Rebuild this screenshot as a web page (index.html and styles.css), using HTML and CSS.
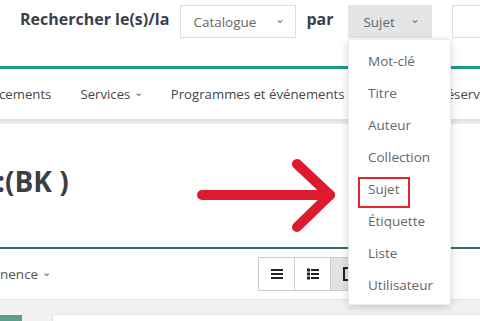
FILE: index.html
```html
<!DOCTYPE html>
<html lang="fr">
<head>
<meta charset="utf-8">
<link rel="stylesheet" href="styles.css">
</head>
<body>
<div class="page">
  <header class="topbar">
    <span class="search-label">Rechercher le(s)/la</span>
    <div class="select select-catalogue"><span>Catalogue</span><span class="chev">&#x2304;</span></div>
    <span class="par">par</span>
    <div class="select select-field"><span>Sujet</span><span class="chev">&#x2304;</span></div>
    <div class="input-box"></div>
  </header>
  <div class="teal-line"></div>
  <nav class="mainnav">
    <span class="nav-item first">cements</span>
    <span class="nav-item">Services <span class="nchev">&#x2304;</span></span>
    <span class="nav-item programmes">Programmes et événements</span>
    <span class="nav-item">Réservations</span>
  </nav>
  <div class="nav-shadow"></div>
  <section class="content">
    <h1 class="title">:(BK )</h1>
  </section>
  <div class="dark-line"></div>
  <div class="toolbar">
    <span class="sort">nence <span class="nchev">&#x2304;</span></span>
    <div class="btn-group">
      <span class="vbtn">
        <svg width="14" height="12" viewBox="0 0 14 12"><rect x="1" y="1" width="12" height="2" fill="#222"/><rect x="1" y="5" width="12" height="2" fill="#222"/><rect x="1" y="9" width="12" height="2" fill="#222"/></svg>
      </span>
      <span class="vbtn">
        <svg width="14" height="12" viewBox="0 0 14 12"><rect x="1" y="0.5" width="3" height="3" fill="#222"/><rect x="5" y="1" width="8" height="2" fill="#222"/><rect x="1" y="4.5" width="3" height="3" fill="#222"/><rect x="5" y="5" width="8" height="2" fill="#222"/><rect x="1" y="8.5" width="3" height="3" fill="#222"/><rect x="5" y="9" width="8" height="2" fill="#222"/></svg>
      </span>
      <span class="vbtn active">
        <svg width="14" height="14" viewBox="0 0 14 14"><rect x="2" y="1" width="10" height="12" fill="none" stroke="#222" stroke-width="2"/></svg>
      </span>
    </div>
  </div>
  <div class="results">
    <div class="thumb"></div>
    <div class="card"></div>
  </div>

  <ul class="dropdown">
    <li>Mot-clé</li>
    <li>Titre</li>
    <li>Auteur</li>
    <li>Collection</li>
    <li class="marked">Sujet<span class="redbox"></span></li>
    <li>Étiquette</li>
    <li>Liste</li>
    <li>Utilisateur</li>
  </ul>

  <svg class="arrow" width="150" height="80" viewBox="0 0 150 80">
    <g stroke="#e01a2e" stroke-width="10" stroke-linecap="round" stroke-linejoin="round" fill="none">
      <line x1="6" y1="40" x2="134" y2="40"/>
      <polyline points="101,9 134,40 101,72"/>
    </g>
  </svg>
</div>
</body>
</html>
```
FILE: styles.css
```css
* { box-sizing: border-box; }
html, body { margin: 0; padding: 0; background: #fff; }
body {
  font-family: "Open Sans", "Noto Sans", sans-serif;
  width: 480px;
  height: 321px;
  overflow: hidden;
}
.page { position: relative; width: 480px; height: 321px; overflow: hidden; }

.topbar {
  height: 66px;
  display: flex;
  align-items: flex-start;
  padding: 5px 0 0 20px;
  white-space: nowrap;
}
.topbar > * { flex-shrink: 0; }
.search-label {
  font-weight: 700;
  font-size: 16px;
  color: #3b404a;
  line-height: 28px;
}
.select {
  height: 33px;
  display: flex;
  align-items: center;
  justify-content: space-between;
  font-size: 13.5px;
  color: #666;
  border: 1px solid #ddd;
}
.select-catalogue { width: 116px; margin-left: 11px; padding: 0 10px 0 12px; }
.par {
  font-weight: 700;
  font-size: 16px;
  color: #3b404a;
  line-height: 28px;
  margin-left: 10px;
  width: 42px;
}
.select-field {
  width: 84px;
  padding: 0 11px 0 14px;
  background: #e5e5e5;
  border-color: #e5e5e5;
}
.chev { font-size: 12px; color: #777; line-height: 1; position: relative; top: -3px; }
.input-box {
  margin-left: 20px;
  width: 60px;
  height: 33px;
  border: 1px solid #ddd;
}

.teal-line { height: 3px; background: #1a9a89; }

.mainnav {
  height: 50px;
  display: flex;
  align-items: center;
  white-space: nowrap;
  font-size: 13.2px;
  color: #474747;
}
.nav-item { margin-right: 28px; flex-shrink: 0; }
.nav-item.first { margin-right: 29px; margin-left: -1px; }
.nav-item.programmes { margin-right: 94px; }
.nchev { font-size: 11px; color: #666; position: relative; top: -3px; }

.nav-shadow {
  height: 5px;
  background: linear-gradient(#dcdcdc, #ededed);
}

.content { height: 123px; padding-top: 39px; }
.title {
  margin: 0;
  font-size: 28px;
  font-weight: 700;
  color: #3a3f47;
  line-height: 36px;
  margin-left: -3px;
  white-space: nowrap;
}

.dark-line { height: 2px; background: #2b6b70; }

.toolbar {
  height: 50px;
  display: flex;
  align-items: center;
}
.sort { font-size: 13.5px; color: #555; width: 258px; }
.btn-group { display: flex; }
.vbtn {
  width: 37px;
  height: 34px;
  border: 1px solid #ccc;
  display: flex;
  align-items: center;
  justify-content: center;
  margin-left: -1px;
  background: #fff;
}
.vbtn:first-child { margin-left: 0; }
.vbtn.active { background: #e2e2e2; }

.results {
  height: 22px;
  background: #f1f1f1;
  border-top: 1px solid #e4e4e4;
  display: flex;
  align-items: flex-end;
}
.thumb { width: 22px; height: 6px; background: #5c9d8d; }
.card {
  margin-left: 30px;
  flex: 1;
  height: 7px;
  background: #fff;
  border-left: 1px solid #ddd;
  border-top: 1px solid #e6e6e6;
}

.dropdown {
  position: absolute;
  left: 348px;
  top: 39px;
  width: 103px;
  margin: 0;
  padding: 5px 0 3px;
  list-style: none;
  background: #fff;
  box-shadow: 0 2px 8px rgba(0,0,0,0.18);
  border: 1px solid #eee;
}
.dropdown li {
  height: 32px;
  line-height: 32px;
  padding-left: 19px;
  font-size: 13.5px;
  color: #666;
  position: relative;
}
.redbox {
  position: absolute;
  left: 9px;
  top: 4px;
  width: 52px;
  height: 31px;
  border: 2px solid #e3262b;
}

.arrow {
  position: absolute;
  left: 196px;
  top: 155px;
}
```
